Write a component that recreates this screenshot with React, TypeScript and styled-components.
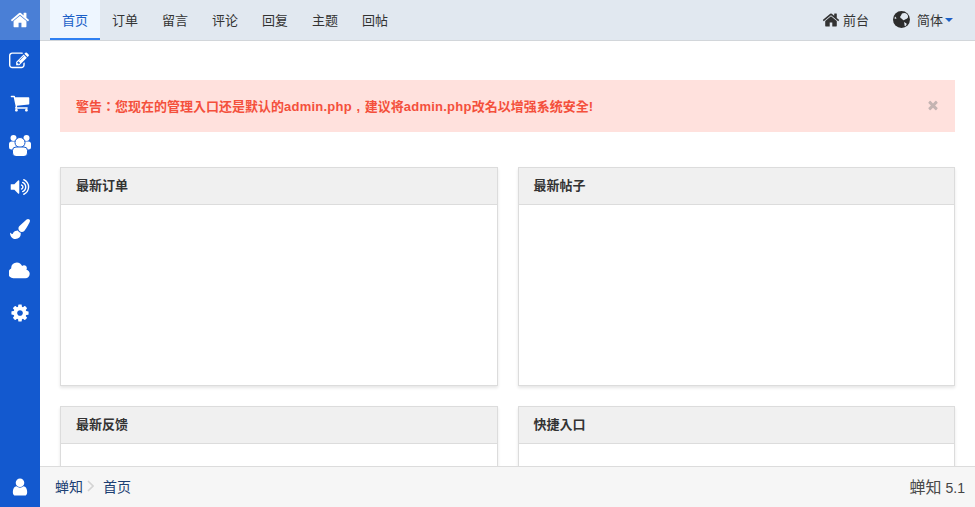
import styled, { createGlobalStyle } from 'styled-components';

const GlobalStyle = createGlobalStyle`
  html, body {
    margin: 0;
    height: 100%;
    overflow: hidden;
    background: #fff;
  }
  body {
    font-family: "Liberation Sans", "Noto Sans CJK TC", sans-serif;
    font-size: 13px;
    color: #333;
  }
`;

const Shell = styled.div`
  display: flex;
  width: 975px;
  height: 507px;
  overflow: hidden;
`;

const Sidebar = styled.aside`
  display: flex;
  flex-direction: column;
  flex: 0 0 40px;
  background: #1359cf;
`;

const SideItem = styled.a<{ $active?: boolean }>`
  display: flex;
  align-items: center;
  justify-content: center;
  height: 42px;
  color: #fff;
  background: ${(p) => (p.$active ? '#4a7fd6' : 'transparent')};

  &:first-child {
    height: 40px;
  }
`;

const SideBottom = styled.div`
  display: flex;
  align-items: center;
  justify-content: center;
  margin-top: auto;
  height: 41px;
  color: #fff;
`;

const Main = styled.div`
  display: flex;
  flex-direction: column;
  flex: 1;
  min-width: 0;
`;

const TopBar = styled.nav`
  display: flex;
  flex: 0 0 41px;
  box-sizing: border-box;
  padding-left: 10px;
  background: #e1e8f0;
  border-bottom: 1px solid #d2d6da;
`;

const Tab = styled.a<{ $active?: boolean }>`
  display: flex;
  align-items: center;
  justify-content: center;
  box-sizing: border-box;
  width: 50px;
  height: 40px;
  font-size: 13px;
  color: ${(p) => (p.$active ? '#1a5fc8' : '#333')};
  background: ${(p) => (p.$active ? '#eef6ff' : 'transparent')};
  border-bottom: 2px solid ${(p) => (p.$active ? '#2f80f2' : 'transparent')};
`;

const TopRight = styled.div`
  display: flex;
  align-items: center;
  gap: 24px;
  margin-left: auto;
  padding-right: 22px;
  height: 39px;
`;

const TopLink = styled.a<{ $gap: number }>`
  display: flex;
  align-items: center;
  gap: ${(p) => p.$gap}px;
  color: #333;
  font-size: 13px;
`;

const Caret = styled.span`
  display: inline-block;
  margin-left: -5px;
  border-top: 4px solid #1a5fc8;
  border-left: 4px solid transparent;
  border-right: 4px solid transparent;
`;

const Content = styled.main`
  flex: 1;
  min-height: 0;
  overflow: hidden;
  padding: 39px 20px 0;
`;

const Alert = styled.div`
  display: flex;
  align-items: center;
  justify-content: space-between;
  height: 52px;
  padding: 0 15px 2px 16px;
  box-sizing: border-box;
  background: #ffe1dd;
  color: #f4503c;
  font-size: 13px;
  font-weight: 700;
`;

const Latin = styled.span`
  letter-spacing: 0.23px;
`;

const WideComma = styled.span`
  display: inline-block;
  width: 13px;
  text-align: center;
`;

const CloseIcon = styled.span`
  display: flex;
  color: #c4b4b2;
`;

const PanelGrid = styled.div`
  display: grid;
  grid-template-columns: 1fr 1fr;
  column-gap: 20px;
  row-gap: 20px;
  margin-top: 35px;
`;

const Panel = styled.section`
  box-sizing: border-box;
  height: 219px;
  background: #fff;
  border: 1px solid #dcdcdc;
  box-shadow: 0 2px 3px rgba(0, 0, 0, 0.1);
`;

const PanelHead = styled.h3`
  box-sizing: border-box;
  height: 37px;
  margin: 0;
  padding: 0 15px;
  line-height: 36px;
  font-size: 13px;
  font-weight: 700;
  color: #333;
  background: #f0f0f0;
  border-bottom: 1px solid #dcdcdc;
`;

const Footer = styled.footer`
  display: flex;
  align-items: center;
  justify-content: space-between;
  flex: 0 0 41px;
  box-sizing: border-box;
  padding: 0 10px 2px 15px;
  background: #f6f6f6;
  border-top: 1px solid #dcdcdc;
  font-size: 14px;
`;

const Crumbs = styled.div`
  display: flex;
  align-items: center;
`;

const Crumb = styled.a`
  color: #1c3f73;
`;

const CrumbSep = styled.span`
  display: flex;
  justify-content: center;
  width: 20px;
  padding-right: 6px;
  box-sizing: border-box;
`;

const Brand = styled.span`
  font-size: 16px;
  color: #4a4a4a;
`;

const Version = styled.span`
  color: #444;
  margin-left: 4px;
`;

// font awesome 4 glyphs, the icon font of the original page
type GlyphProps = { d: string; size?: number; box?: number };

const Glyph = ({ d, size = 20, box = 1792 }: GlyphProps) => (
  <svg width={(size * box) / 1792} height={size} viewBox={`0 0 ${box} 1792`} fill="currentColor">
    <path d={d} />
  </svg>
);

const HOME =
  'M1472 992v480q0 26-19 45t-45 19h-384v-384h-256v384h-384q-26 0-45-19t-19-45v-480q0-1 .5-3t.5-3l575-474 575 474q1 2 1 6zm223-69l-62 74q-8 9-21 11h-3q-13 0-21-7l-692-577-692 577q-12 8-24 7-13-2-21-11l-62-74q-8-10-7-23.5t11-21.5l719-599q32-26 76-26t76 26l244 204v-195q0-14 9-23t23-9h192q14 0 23 9t9 23v408l219 182q10 8 11 21.5t-7 23.5z';
const EDIT =
  'M888 1184l116-116-152-152-116 116v56h96v96h56zm440-720q-16-16-33 1l-350 350q-17 17-1 33t33-1l350-350q17-17 1-33zm80 594v190q0 119-84.500 203.500t-203.500 84.500h-832q-119 0-203.500-84.500t-84.500-203.500v-832q0-119 84.500-203.500t203.500-84.500h832q63 0 117 25 15 7 18 23 3 17-9 29l-49 49q-14 14-32 8-23-6-45-6h-832q-66 0-113 47t-47 113v832q0 66 47 113t113 47h832q66 0 113-47t47-113v-126q0-13 9-22l64-64q15-15 35-7t20 29zm-96-738l288 288-672 672h-288v-288zm444 132l-92 92-288-288 92-92q28-28 68-28t68 28l152 152q28 28 28 68t-28 68z';
const CART =
  'M704 1536q0 52-38 90t-90 38-90-38-38-90 38-90 90-38 90 38 38 90zm896 0q0 52-38 90t-90 38-90-38-38-90 38-90 90-38 90 38 38 90zm128-1088v512q0 24-16.500 42.500t-40.500 21.500l-1044 122q13 60 13 70 0 16-24 64h920q26 0 45 19t19 45-19 45-45 19h-1024q-26 0-45-19t-19-45q0-11 8-31.500t16-36 21.500-40 15.500-29.500l-177-823h-204q-26 0-45-19t-19-45 19-45 45-19h256q16 0 28.500 6.500t19.500 15.500 13 24.500 8 26 5.500 29.500 4.500 26h1201q26 0 45 19t19 45z';
const VOLUME =
  'M832 352v1088q0 26-19 45t-45 19-45-19l-333-333h-262q-26 0-45-19t-19-45v-384q0-26 19-45t45-19h262l333-333q19-19 45-19t45 19 19 45zm384 544q0 76-42.500 141.500t-112.500 93.500q-10 5-25 5-26 0-45-18.500t-19-45.500q0-21 12-35.500t29-25 34-23 29-36 12-56.500-12-56.500-29-36-34-23-29-25-12-35.500q0-27 19-45.500t45-18.500q15 0 25 5 70 27 112.500 93t42.500 142zm256 0q0 153-85 282.500t-225 188.500q-13 5-25 5-27 0-46-19t-19-45q0-39 39-59 56-29 76-44 74-54 115.500-135.500t41.500-173.500-41.500-173.500-115.500-135.500q-20-15-76-44-39-20-39-59 0-26 19-45t45-19q13 0 26 5 140 59 225 188.500t85 282.500zm256 0q0 230-127 422.500t-338 283.500q-13 5-26 5-26 0-45-19t-19-45q0-36 39-59 7-4 22.500-10.500t22.500-10.500q46-25 82-51 123-91 192-227t69-289-69-289-192-227q-36-26-82-51-7-4-22.500-10.500t-22.500-10.500q-39-23-39-59 0-26 19-45t45-19q13 0 26 5 211 91 338 283.500t127 422.500z';
const BRUSH =
  'M1615 0q70 0 122.500 46.500t52.500 116.500q0 63-45 151-332 629-465 752-97 91-218 91-126 0-216.500-92.500t-90.500-219.500q0-128 92-212l638-579q59-54 130-54zm-909 1034q39 76 106.500 130t150.500 76l1 71q4 213-129.500 347t-348.500 134q-123 0-218-46.500t-152.500-127.500-86.500-183-29-220q7 5 41 30t62 44.500 59 36.500 46 17q41 0 55-37 25-66 57.500-112.500t69.500-76 88-47.500 103-25.500 125-10.500z';
const CLOUD =
  'M1856 1152q0 159-112.500 271.500t-271.500 112.500h-1088q-185 0-316.500-131.500t-131.500-316.500q0-132 71-241.500t187-163.500q-2-28-2-43 0-212 150-362t362-150q158 0 286.500 88t187.500 230q70-62 166-62 106 0 181 75t75 181q0 75-41 138 129 30 213 134.500t84 239.500z';
const COG =
  'M1152 896q0-106-75-181t-181-75-181 75-75 181 75 181 181 75 181-75 75-181zm512-109v222q0 12-8 23t-20 13l-185 28q-19 54-39 91 35 50 107 138 10 12 10 25t-9 23q-27 37-99 108t-94 71q-12 0-26-9l-138-108q-44 23-91 38-16 136-29 186-7 28-36 28h-222q-14 0-24.500-8.500t-11.500-21.500l-28-184q-49-16-90-37l-141 107q-10 9-25 9-14 0-25-11-126-114-165-168-7-10-7-23 0-12 8-23 15-21 51-66.500t54-70.500q-27-50-41-99l-183-27q-13-2-21-12.500t-8-23.500v-222q0-12 8-23t19-13l186-28q14-46 39-92-40-57-107-138-10-12-10-24 0-10 9-23 26-36 98.500-107.500t94.500-71.500q13 0 26 10l138 107q44-23 91-38 16-136 29-186 7-28 36-28h222q14 0 24.500 8.500t11.500 21.500l28 184q49 16 90 37l142-107q9-9 24-9 13 0 25 10 129 119 165 170 7 8 7 22 0 12-8 23-15 21-51 66.500t-54 70.500q26 50 41 98l183 28q13 2 21 12.500t8 23.500z';
const USER =
  'M1536 1399q0 109-62.500 187t-150.500 78h-854q-88 0-150.500-78t-62.500-187q0-85 8.500-160.500t31.500-152 58.500-131 94-89 134.500-34.500q131 128 313 128t313-128q76 0 134.500 34.500t94 89 58.500 131 31.500 152 8.500 160.500zm-256-887q0 159-112.500 271.500t-271.500 112.500-271.500-112.500-112.500-271.500 112.500-271.500 271.500-112.500 271.500 112.500 112.500 271.500z';
const TIMES =
  'M1490 1322q0 40-28 68l-136 136q-28 28-68 28t-68-28l-294-294-294 294q-28 28-68 28t-68-28l-136-136q-28-28-28-68t28-68l294-294-294-294q-28-28-28-68t28-68l136-136q28-28 68-28t68 28l294 294 294-294q28-28 68-28t68 28l136 136q28 28 28 68t-28 68l-294 294 294 294q28 28 28 68z';

const GroupIcon = () => (
  <svg width="22" height="21" viewBox="0 0 22 21" fill="currentColor">
    <circle cx="4.500" cy="3" r="3" />
    <circle cx="17.500" cy="3" r="3" />
    <rect x="0" y="6.500" width="8" height="8" rx="2.500" />
    <rect x="14" y="6.500" width="8" height="8" rx="2.500" />
    <circle cx="11" cy="7.500" r="5" stroke="#1359cf" strokeWidth="1" />
    <rect x="3.500" y="12" width="15" height="9.500" rx="3.500" stroke="#1359cf" strokeWidth="1" />
  </svg>
);

const GlobeIcon = () => (
  <svg width="17" height="17" viewBox="0 0 17 17">
    <circle cx="8.500" cy="8.500" r="8.500" fill="#2c2c2c" />
    <path d="M9 2.500q3-1 5 .5 1.500 1.500 1 3.500-1 1.500-3 2-1 1-2 .5-1-1.500-2.500-2-1-1.500.5-2.500 .5-1 1-2z" fill="#e1e8f0" />
    <path d="M11 11l2.500 1.500q.5 1-1 2.500-1.500 0-1-1.500z" fill="#e1e8f0" />
    <path d="M2 5.500q1 .5 1.500 2-1 .5-2 0z" fill="#e1e8f0" />
  </svg>
);

const ChevronIcon = () => (
  <svg width="7" height="12" viewBox="0 0 7 12" fill="none" stroke="#d4d4d4" strokeWidth="1.600">
    <path d="M1 1l5 5-5 5" />
  </svg>
);

const sideItems = [
  <Glyph d={HOME} />,
  <Glyph d={EDIT} box={1920} />,
  <Glyph d={CART} />,
  <GroupIcon />,
  <Glyph d={VOLUME} />,
  <Glyph d={BRUSH} />,
  <Glyph d={CLOUD} box={1920} />,
  <Glyph d={COG} />,
];
const tabs = ['首页', '订单', '留言', '评论', '回复', '主题', '回帖'];
const panels = ['最新订单', '最新帖子', '最新反馈', '快捷入口'];

export default function App() {
  return (
    <Shell>
      <GlobalStyle />
      <Sidebar>
        {sideItems.map((icon, i) => (
          <SideItem key={i} $active={i === 0}>
            {icon}
          </SideItem>
        ))}
        <SideBottom>
          <Glyph d={USER} />
        </SideBottom>
      </Sidebar>
      <Main>
        <TopBar>
          {tabs.map((t, i) => (
            <Tab key={t} $active={i === 0}>{t}</Tab>
          ))}
          <TopRight>
            <TopLink $gap={3}>
              <Glyph d={HOME} size={18} />
              前台
            </TopLink>
            <TopLink $gap={7}>
              <GlobeIcon />
              简体
              <Caret />
            </TopLink>
          </TopRight>
        </TopBar>
        <Content>
          <Alert>
            <span>
              警告：您现在的管理入口还是默认的<Latin>admin.php</Latin><WideComma>,</WideComma>建议将<Latin>admin.php</Latin>改名以增强系统安全!
            </span>
            <CloseIcon><Glyph d={TIMES} size={14} /></CloseIcon>
          </Alert>
          <PanelGrid>
            {panels.map((p) => (
              <Panel key={p}>
                <PanelHead>{p}</PanelHead>
              </Panel>
            ))}
          </PanelGrid>
        </Content>
        <Footer>
          <Crumbs>
            <Crumb>蝉知</Crumb>
            <CrumbSep><ChevronIcon /></CrumbSep>
            <Crumb>首页</Crumb>
          </Crumbs>
          <span>
            <Brand>蝉知</Brand>
            <Version>5.1</Version>
          </span>
        </Footer>
      </Main>
    </Shell>
  );
}
